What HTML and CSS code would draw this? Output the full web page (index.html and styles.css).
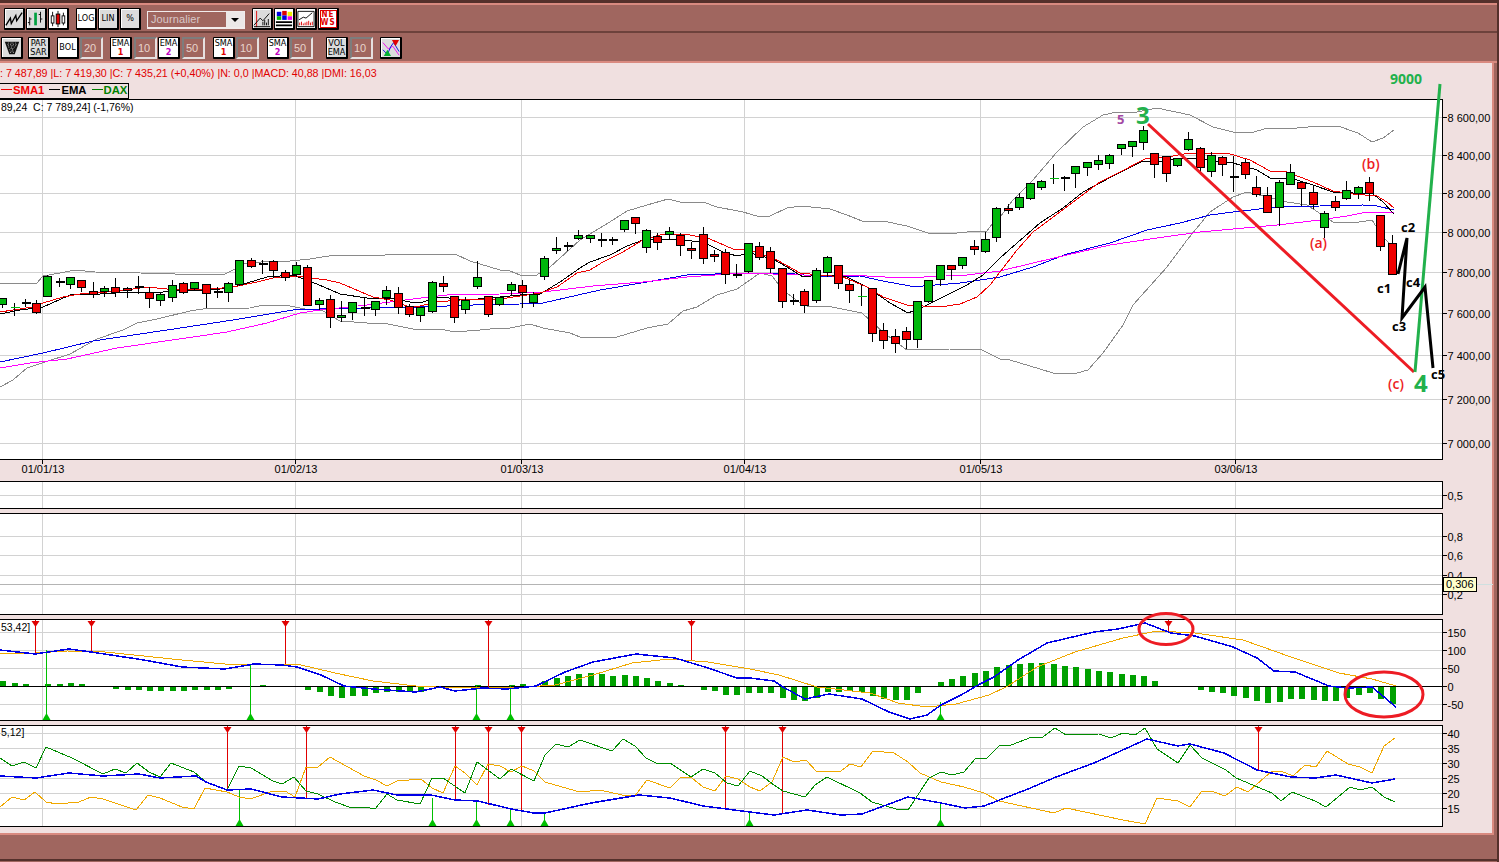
FILE: index.html
```html
<!DOCTYPE html>
<html lang="fr">
<head>
  <meta charset="UTF-8">
  <meta name="viewport" content="width=device-width, initial-scale=1.0">
  <title>DAX - Journalier</title>
  <link rel="stylesheet" href="styles.css">
</head>
<body>
  <div class="window">
    <header class="toolbars">
      <div class="toolbar toolbar-top">
        <button class="tool tool-grey"><svg viewBox="0 0 20 20"><path class="ic-line" d="M1 17 6 9 7 15 12 6 13 12 19 3"/></svg></button>
        <button class="tool tool-grey"><svg viewBox="0 0 20 20"><path class="ic-thin" d="M3 8V17M1 14H3M3 10H5M15 2V14M13 5H15M15 10H17"/><rect x="8" y="3" width="3" height="14" fill="#00a040"/></svg></button>
        <button class="tool tool-white"><svg viewBox="0 0 20 20"><path class="ic-thin" d="M4 2V18M10 1V19M16 3V17"/><rect x="2.500" y="6.500" width="3" height="8" fill="#fff" stroke="#000"/><rect x="8" y="4.500" width="4" height="11" fill="#e00000" stroke="#000"/><rect x="14.500" y="6.500" width="3" height="8" fill="#fff" stroke="#000"/></svg></button>
        <button class="tool tool-white gap-6">LOG</button>
        <button class="tool tool-grey">LIN</button>
        <button class="tool tool-grey">%</button>
        <div class="period">
          <span class="period-value">Journalier</span>
          <span class="period-arrow"></span>
        </div>
        <button class="tool tool-grey gap-6"><svg viewBox="0 0 20 20"><path d="M4 1V19" stroke="#e00000" fill="none"/><path class="ic-thin" d="M1 17 8 9 11 12 18 4M1 18.500H19"/><path d="M11 17V13M13 17V11M15 17V14M17 17V10" stroke="#000" fill="none"/></svg></button>
        <button class="tool tool-white"><svg viewBox="0 0 20 20"><rect x="2" y="2" width="5" height="5" fill="#0000e0"/><rect x="8" y="1" width="5" height="5" fill="#e00000"/><rect x="14" y="2" width="5" height="5" fill="#f0f000"/><rect x="2" y="7" width="5" height="4" fill="#00c000"/><rect x="8" y="6" width="5" height="5" fill="#0000e0"/><rect x="14" y="7" width="5" height="4" fill="#f000f0"/><path class="ic-bar" d="M1 13.500H19M1 17H19"/></svg></button>
        <button class="tool tool-white"><svg viewBox="0 0 20 20"><path d="M1 1.500H19V18.500H1Z" fill="none" stroke="#000"/><path class="ic-thin" d="M2 11 7 8 10 9 17 3"/><path d="M3 17V14M5 17V13M7 17V15M9 17V14M11 17V13M13 17V12M15 17V14M17 17V13" stroke="#e00000" fill="none"/></svg></button>
        <button class="tool tool-white"><span class="news-text">NE<br>WS</span></button>
      </div>
      <div class="toolbar toolbar-bottom">
        <button class="tool tool-grey tool-tall"><svg viewBox="0 0 20 20"><path d="M2 3H18L13 17H7Z" fill="#111"/><path d="M5 6H15M6 9H14M7 12H13M8 15H12M6 4V8M9 4V16M11 4V16M14 4V8" stroke="#bbb" stroke-dasharray="1 2" fill="none"/></svg></button>
        <button class="tool tool-grey tool-tall gap-4">PAR<br>SAR</button>
        <button class="tool tool-white tool-tall gap-6">BOL</button>
        <span class="field">20</span>
        <button class="tool tool-white tool-tall gap-6"><span>EMA<br><b class="num-red">1</b></span></button>
        <span class="field gap-1">10</span>
        <button class="tool tool-white tool-tall"><span>EMA<br><b class="num-purple">2</b></span></button>
        <span class="field gap-1">50</span>
        <button class="tool tool-white tool-tall gap-7"><span>SMA<br><b class="num-red">1</b></span></button>
        <span class="field">10</span>
        <button class="tool tool-white tool-tall gap-7"><span>SMA<br><b class="num-purple">2</b></span></button>
        <span class="field">50</span>
        <button class="tool tool-grey tool-tall gap-12">VOL<br>EMA</button>
        <span class="field gap-1">10</span>
        <button class="tool tool-grey tool-tall gap-6"><svg viewBox="0 0 20 20"><path d="M1 4 7 11 12 8 19 18" fill="none" stroke="#f000f0"/><path d="M1 12 6 17 10 8 13 4 19 14" fill="none" stroke="#0000e0"/><path d="M11 1H19L15 8Z" fill="#e00000"/><path d="M2 19H10L6 12Z" fill="#00b030"/></svg></button>
      </div>
    </header>

    <main class="content">
      <p class="quote">: 7 487,89 |L: 7 419,30 |C: 7 435,21 (+0,40%) |N: 0,0 |MACD: 40,88 |DMI: 16,03</p>
      <div class="legend">
        <span class="legend-item legend-red">SMA1</span>
        <span class="legend-item legend-black">EMA</span>
        <span class="legend-item legend-green">DAX</span>
      </div>
      <svg class="pane" id="pricePane" viewBox="0 99 1494 382" width="1494" height="382"></svg>
      <svg class="pane" id="emptyPane" viewBox="0 481 1494 32" width="1494" height="32"></svg>
      <svg class="pane" id="volumePane" viewBox="0 513 1494 106" width="1494" height="106"></svg>
      <svg class="pane" id="macdPane" viewBox="0 619 1494 106" width="1494" height="106"></svg>
      <svg class="pane" id="dmiPane" viewBox="0 725 1494 102" width="1494" height="102"></svg>
    </main>

    <footer class="statusbar"></footer>

    <svg class="drawing" viewBox="0 0 1499 862" width="1499" height="862">
      <path class="draw-red" d="M1148 124 1414 372"/>
      <path class="draw-green" d="M1415 372 1440 84"/>
      <path class="draw-black" d="M1398 274 1407 238 1402 318 1425 287 1433 368"/>
      <ellipse class="draw-ring" cx="1166" cy="629" rx="27" ry="15.500"/>
      <ellipse class="draw-ring" cx="1384" cy="694.500" rx="39" ry="22.500"/>
      <text class="note note-green" x="1390" y="84">9000</text>
      <text class="note note-big" x="1136" y="124">3</text>
      <text class="note note-big" x="1414" y="392">4</text>
      <text class="note note-purple" x="1117" y="124">5</text>
      <text class="note note-red" x="1362" y="169">(b)</text>
      <text class="note note-red" x="1310" y="248">(a)</text>
      <text class="note note-red" x="1388" y="389">(c)</text>
      <text class="note" x="1377" y="293">c1</text>
      <text class="note" x="1401" y="232">c2</text>
      <text class="note" x="1392" y="331">c3</text>
      <text class="note" x="1406" y="287">c4</text>
      <text class="note" x="1431" y="379">c5</text>
    </svg>
  </div>

  <script src="chart.js"></script>
</body>
</html>
```

FILE: styles.css
```css
body {
  margin: 0;
  padding: 0;
  font-family: "Liberation Sans", Arial, sans-serif;
}

.window {
  position: relative;
  width: 1499px;
  height: 862px;
  box-sizing: border-box;
  display: flex;
  flex-direction: column;
  overflow: hidden;
  background: #a0665f;
  border-top: 3px solid #54302b;
  border-right: 2px solid #54302b;
}

/* toolbars */
.toolbars {
  border-top: 2px solid #d98a80;
}

.toolbar {
  display: flex;
  box-sizing: border-box;
  column-gap: 1px;
}

.toolbar-top {
  height: 28px;
  padding: 3px 0 0 4px;
  border-bottom: 2px solid #6d423c;
}

.toolbar-bottom {
  height: 30px;
  padding: 4px 0 0 1px;
  border-bottom: 2px solid #d98a80;
}

.tool {
  box-sizing: border-box;
  width: 21px;
  height: 22px;
  padding: 0;
  display: flex;
  align-items: center;
  justify-content: center;
  border: 1px solid #000;
  border-right-width: 2px;
  border-bottom-width: 2px;
  border-radius: 1px;
  box-shadow: inset 1px 1px 0 #fff;
  font-family: "Liberation Sans Narrow", "DejaVu Sans Condensed", "Liberation Sans", sans-serif;
  font-size: 9px;
  line-height: 9px;
  color: #000;
  text-align: center;
}

.tool svg {
  display: block;
  width: 18px;
  height: 18px;
}

.tool-grey {
  background: #dcdcdc;
}

.tool-white {
  background: #fff;
}

.tool-tall {
  width: 22px;
}

.gap-1 {
  margin-left: 1px;
}

.gap-4 {
  margin-left: 4px;
}

.gap-6 {
  margin-left: 6px;
}

.gap-7 {
  margin-left: 7px;
}

.gap-12 {
  margin-left: 12px;
}

.tool b {
  font-weight: 700;
}

.num-red {
  color: #e00000;
}

.num-purple {
  color: #c000c0;
}

.news-text {
  display: block;
  width: 15px;
  border: 1px solid #e00000;
  color: #e00000;
  font-weight: 700;
  font-size: 8px;
  line-height: 8px;
  letter-spacing: 1px;
}

.ic-line {
  fill: none;
  stroke: #000;
  stroke-width: 1.500;
}

.ic-thin {
  fill: none;
  stroke: #000;
  stroke-width: 1;
}

.ic-bar {
  fill: none;
  stroke: #000;
  stroke-width: 2;
}

.period {
  display: flex;
  align-items: stretch;
  box-sizing: border-box;
  width: 98px;
  height: 18px;
  margin: 3px 0 0 5px;
  border: 1px solid #f2ecec;
  border-bottom-width: 2px;
  background: #a0665f;
}

.period-value {
  flex: 1;
  padding-left: 3px;
  color: #d8c8c8;
  font-size: 11px;
  line-height: 15px;
  letter-spacing: .1px;
}

.period-arrow {
  position: relative;
  width: 18px;
  background: #ece8e8;
}

.period-arrow::after {
  content: "";
  position: absolute;
  left: 5px;
  top: 6px;
  border: 4px solid transparent;
  border-top: 4px solid #000;
  border-bottom: 0;
}

.field {
  box-sizing: border-box;
  width: 23px;
  height: 22px;
  padding-left: 2px;
  border: 2px solid;
  border-color: #7d7d7d #e6e0e0 #e6e0e0 #7d7d7d;
  background: #a0665f;
  color: #e8d4cc;
  font-size: 11px;
  line-height: 18px;
}

/* chart area */
.content {
  flex: none;
  height: 770px;
  margin-right: 3px;
  border-right: 2px solid #d98a80;
  border-bottom: 2px solid #d98a80;
  background: #f0e0e0;
}

.quote {
  height: 20px;
  margin: 0;
  color: #e00000;
  font-size: 10.700px;
  line-height: 20px;
  white-space: nowrap;
}

.legend {
  display: flex;
  box-sizing: border-box;
  width: fit-content;
  height: 16px;
  padding: 0 1px 0 1px;
  column-gap: 5px;
  border: 1px solid #000;
  border-left: 0;
  font-weight: 700;
  font-size: 11.300px;
  line-height: 12px;
}

.legend-item::before {
  content: "";
  display: inline-block;
  width: 11px;
  height: 1px;
  margin-right: 1px;
  vertical-align: 4px;
  background: currentColor;
}

.legend-red {
  color: #f00000;
}

.legend-black {
  color: #000;
}

.legend-green {
  color: #008000;
}

.pane {
  display: block;
}

.pane-box {
  fill: #fff;
  stroke: #000;
  shape-rendering: crispEdges;
}

.pane-edge {
  fill: none;
  stroke: #000;
  shape-rendering: crispEdges;
}

.grid {
  stroke: #d2d2d2;
  shape-rendering: crispEdges;
}

.tick {
  stroke: #000;
  shape-rendering: crispEdges;
}

.axis-label {
  font-size: 11px;
  fill: #000;
}

.pane-title {
  font-size: 10.500px;
  fill: #000;
  white-space: pre;
}

.curve {
  fill: none;
  shape-rendering: crispEdges;
}

.curve-band {
  stroke: #8a8a8a;
}

.curve-sma {
  stroke: #f00000;
}

.curve-ema {
  stroke: #000;
}

.curve-blue {
  stroke: #0000e6;
  stroke-width: 1.500;
}

.curve-blue-thin {
  stroke: #0000e6;
}

.curve-pink {
  stroke: #ff00ff;
}

.curve-orange {
  stroke: #f0a800;
}

.curve-dmi {
  stroke: #008c00;
}

.zero-line {
  stroke: #000;
  stroke-width: 1;
  shape-rendering: crispEdges;
}

.wick {
  stroke: #000;
  shape-rendering: crispEdges;
}

.body {
  stroke: #000;
  shape-rendering: crispEdges;
}

.body-up {
  fill: #00b80c;
}

.body-down {
  fill: #f00000;
}

.doji {
  stroke: #000;
  stroke-width: 2;
  shape-rendering: crispEdges;
}

.doji-up {
  stroke: #00b80c;
  stroke-width: 1;
  shape-rendering: crispEdges;
}

.hist-bar {
  fill: #00a000;
  shape-rendering: crispEdges;
}

.signal-red {
  stroke: #e00000;
  shape-rendering: crispEdges;
}

.signal-green {
  stroke: #00c000;
  shape-rendering: crispEdges;
}

.mark-red {
  fill: #e00000;
}

.mark-green {
  fill: #00c000;
}

.cross-line {
  stroke: #b4b4b4;
  shape-rendering: crispEdges;
}

.cross-line-end {
  stroke: #cfe0e0;
  shape-rendering: crispEdges;
}

.tip-box {
  fill: #ffffcc;
  stroke: #000;
  shape-rendering: crispEdges;
}

/* bottom bar */
.statusbar {
  flex: 1;
  margin-bottom: 1px;
  border-bottom: 2px solid #54302b;
}

/* hand drawn notes over the charts */
.drawing {
  position: absolute;
  left: 0;
  top: -3px;
  pointer-events: none;
}

.draw-red,
.draw-green,
.draw-black,
.draw-ring {
  fill: none;
}

.draw-red {
  stroke: #ed1c24;
  stroke-width: 3;
}

.draw-green {
  stroke: #22b14c;
  stroke-width: 3;
}

.draw-black {
  stroke: #000;
  stroke-width: 3;
}

.draw-ring {
  stroke: #ed1c24;
  stroke-width: 3;
}

.note {
  font-family: "Open Sans", sans-serif;
  font-size: 13px;
  font-weight: 700;
  fill: #000;
}

.note-green {
  font-size: 14px;
  fill: #22b14c;
}

.note-big {
  font-size: 24px;
  fill: #22b14c;
}

.note-purple {
  fill: #a349a4;
}

.note-red {
  font-size: 14px;
  font-weight: 600;
  fill: #ed1c24;
}
```

FILE: chart.js
```js
// all coordinates below are page pixels, the panes use matching viewBoxes
const SVG_NS = "http://www.w3.org/2000/svg";
const RIGHT = 1442.5;
const MONTH_LINES = [42.5, 295.5, 521.5, 744.5, 980.5, 1235.5];
const DATES = ["01/01/13", "01/02/13", "01/03/13", "01/04/13", "01/05/13", "03/06/13"];

function slotX(i) {
  return Math.round(2.3 + 11.295 * i);
}

function add(svg, name, attrs, text) {
  const node = document.createElementNS(SVG_NS, name);
  for (const key in attrs) node.setAttribute(key, attrs[key]);
  if (text) node.textContent = text;
  svg.appendChild(node);
  return node;
}

function line(svg, x1, y1, x2, y2, cls) {
  add(svg, "line", { x1, y1, x2, y2, class: cls });
}

function curve(svg, points, cls) {
  add(svg, "polyline", { points, class: "curve " + cls });
}

// white box, grid, ticks and value labels of one pane
function drawFrame(svg, top, bottom, rows) {
  add(svg, "rect", { x: -2.5, y: top, width: RIGHT + 2.5, height: bottom - top, class: "pane-box" });
  MONTH_LINES.forEach((x) => line(svg, x, top, x, bottom, "grid"));
  rows.forEach(([y, label]) => {
    line(svg, 0, y, RIGHT, y, "grid");
    line(svg, RIGHT, y, RIGHT + 4, y, "tick");
    add(svg, "text", { x: RIGHT + 5, y: y + 4, class: "axis-label" }, label);
  });
}

function drawEdge(svg, top, bottom) {
  add(svg, "rect", { x: -2.5, y: top, width: RIGHT + 2.5, height: bottom - top, class: "pane-edge" });
}

function signalsDown(svg, top, list) {
  list.forEach(([x, y]) => {
    line(svg, x, top, x, y, "signal-red");
    add(svg, "path", { d: `M${x - 4} ${top + 1}H${x + 4}L${x} ${top + 7}Z`, class: "mark-red" });
  });
}

function signalsUp(svg, bottom, list) {
  list.forEach(([x, y]) => {
    line(svg, x, bottom, x, y, "signal-green");
    add(svg, "path", { d: `M${x - 4} ${bottom}H${x + 4}L${x} ${bottom - 7}Z`, class: "mark-green" });
  });
}

// [wick top, body top, body bottom, wick bottom, kind], thirds of a pixel below y=100
// kind: g up, r down, k black doji, x green doji
const CANDLES = [
  [595,595,613,620,"g"],[606,620,620,645,"x"],[593,605,605,618,"k"],[598,610,635,638,"r"],[522,528,587,587,"g"],
  [530,542,542,557,"k"],[527,531,553,563,"g"],[537,541,560,572,"r"],[543,572,582,590,"r"],[555,565,572,587,"g"],
  [531,560,575,587,"r"],[558,563,569,590,"r"],[525,557,557,578,"k"],[558,577,593,620,"r"],[575,583,601,614,"g"],
  [537,556,592,603,"g"],[544,550,577,578,"r"],[547,547,563,567,"g"],[550,553,580,620,"r"],[558,574,574,590,"k"],
  [544,550,577,602,"g"],[477,481,551,555,"g"],[471,481,497,500,"r"],[478,488,488,518,"k"],[477,484,511,532,"r"],
  [507,517,532,540,"r"],[484,496,521,527,"g"],[492,502,616,616,"r"],[592,601,613,627,"g"],[582,598,652,680,"r"],
  [600,646,652,662,"g"],[607,607,637,657,"g"],[592,620,620,645,"k"],[600,604,628,645,"g"],[555,571,592,612,"g"],
  [558,580,622,638,"r"],[610,619,643,648,"r"],[622,622,646,662,"g"],[540,547,632,636,"g"],[525,549,559,573,"r"],
  [585,589,652,665,"r"],[588,601,628,639,"g"],[480,532,559,563,"g"],[589,589,643,647,"r"],[592,592,612,615,"g"],
  [544,553,571,583,"g"],[537,556,575,622,"r"],[574,583,607,617,"g"],[465,475,529,537,"g"],[408,445,451,458,"g"],
  [423,435,435,450,"k"],[387,406,415,418,"g"],[403,406,415,425,"g"],[397,416,416,437,"k"],[408,416,416,431,"k"],
  [361,361,388,392,"g"],[352,352,370,398,"r"],[384,391,442,455,"g"],[397,409,427,446,"r"],[378,394,401,414,"g"],
  [397,404,436,464,"r"],[424,445,451,473,"r"],[378,403,475,488,"r"],[448,463,469,482,"r"],[445,455,523,548,"r"],
  [489,521,521,530,"k"],[430,430,514,516,"g"],[424,439,472,476,"r"],[438,454,505,515,"r"],[502,505,604,620,"r"],
  [579,599,599,613,"k"],[565,574,616,635,"r"],[502,511,601,606,"g"],[466,472,517,527,"g"],[492,496,550,563,"r"],
  [538,553,571,607,"r"],[553,589,589,616,"x"],[565,565,700,722,"r"],[667,691,721,743,"r"],[685,709,730,755,"r"],
  [679,694,718,743,"r"],[601,604,718,740,"g"],[538,541,604,606,"g"],[492,496,538,555,"g"],[492,496,508,538,"r"],
  [472,472,496,503,"g"],[418,439,448,461,"r"],[392,418,454,457,"g"],[319,325,412,422,"g"],[310,325,331,338,"r"],
  [277,290,322,328,"g"],[250,250,294,296,"g"],[238,244,262,266,"g"],[189,235,235,250,"x"],[226,232,232,269,"k"],
  [199,199,220,260,"g"],[184,187,202,224,"g"],[162,181,193,208,"g"],[160,166,190,205,"g"],[133,133,145,163,"g"],
  [121,124,139,167,"g"],[75,91,127,146,"g"],[157,160,193,232,"r"],[169,169,220,244,"r"],[175,175,196,199,"g"],
  [94,118,148,151,"g"],[139,145,202,212,"r"],[154,166,214,227,"g"],[166,172,193,224,"r"],[166,227,227,272,"k"],
  [175,187,223,235,"r"],[226,262,283,289,"r"],[259,286,337,337,"r"],[238,247,322,376,"g"],[190,217,253,253,"g"],
  [241,247,265,316,"r"],[253,277,313,325,"r"],[331,340,382,412,"g"],[286,304,322,331,"r"],[241,271,295,298,"g"],
  [256,262,280,295,"g"],[229,247,280,301,"r"],[346,346,439,449,"r"],[403,430,523,523,"r"]
];

function toPage(z) {
  return Math.round(100 + z / 3) + 0.5;
}

function drawCandles(svg) {
  CANDLES.forEach(([high, open, close, low, kind], i) => {
    const x = slotX(i) + 0.5;
    line(svg, x, toPage(high), x, toPage(low), "wick");
    if (kind === "k") {
      line(svg, x - 4, toPage(open), x + 5, toPage(open), "doji");
    } else if (kind === "x") {
      line(svg, x - 4, toPage(open), x + 5, toPage(open), "doji-up");
    } else {
      const top = toPage(open);
      add(svg, "rect", {
        x: x - 4,
        y: top,
        width: 8,
        height: toPage(close) - top,
        class: "body " + (kind === "g" ? "body-up" : "body-down")
      });
    }
  });
}

function drawPrice() {
  const svg = document.getElementById("pricePane");
  drawFrame(svg, 99.5, 459.5, [
    [117.5, "8 600,00"], [155.5, "8 400,00"], [193.5, "8 200,00"], [232.5, "8 000,00"], [272.5, "7 800,00"],
    [313.5, "7 600,00"], [355.5, "7 400,00"], [399.5, "7 200,00"], [443.5, "7 000,00"]
  ]);
  curve(svg, "0,284 13,283 37,283 43,276 60,273 75,270 95,272 140,273 175,274 225,274 235,269 243,264 270,261 290,261 310,259 335,255 385,255 410,254 455,254 470,261 500,270 510,271 520,275 535,276 550,267 580,240 613,220 627,211 647,205 668,199 680,202 703,202 717,207 743,212 760,217 770,216 787,208 802,206 830,209 847,215 862,221 883,221 907,226 928,233 947,234 967,232 987,231 993,223 1000,217 1013,200 1033,180 1057,152 1083,127 1103,115 1117,112 1137,112 1157,108 1190,115 1213,127 1233,132 1250,133 1268,128 1297,128 1320,126 1338,126 1358,133 1372,142 1383,138 1394,130", "curve-band");
  curve(svg, "0,387 13,380 27,368 42,363 70,354 97,339 123,330 137,323 157,319 190,311 203,309 250,308 263,305 290,306 305,309 323,311 340,321 367,323 383,323 413,329 440,329 455,332 480,330 500,328 510,328 530,324 543,328 570,333 580,337 617,337 647,328 668,324 683,311 697,307 717,295 737,289 760,273 772,276 783,290 800,303 807,306 827,306 862,313 883,332 907,350 950,349 980,349 1000,359 1010,360 1030,366 1053,373 1077,373 1088,370 1103,353 1123,325 1133,305 1167,267 1187,240 1210,212 1233,197 1247,192 1263,196 1287,202 1307,205 1333,222 1353,223 1372,220 1383,237 1393,247", "curve-band");
  curve(svg, "0,362 43,353 93,341 167,330 233,320 293,310 320,309 367,308 420,307 447,306 473,305 520,304 543,303 600,290 647,282 687,275 743,273 787,273 820,277 860,276 883,281 910,286 923,286 960,283 987,279 1000,277 1033,267 1067,254 1110,243 1147,230 1180,223 1210,215 1233,212 1277,207 1320,206 1363,205 1377,206 1394,210", "curve-blue-thin");
  curve(svg, "0,368 30,363 67,359 117,348 193,337 227,332 267,323 300,313 320,310 367,305 413,299 447,295 500,294 543,292 593,286 643,282 687,277 743,273 803,275 867,276 903,278 967,275 1000,271 1033,263 1067,255 1110,245 1157,238 1200,232 1233,229 1277,225 1320,220 1347,216 1367,212 1394,212", "curve-pink");
  curve(svg, "0,314 20,310 43,307 70,295 100,294 133,292 163,292 177,290 200,291 230,288 247,283 267,277 293,275 317,284 340,294 367,298 390,298 410,302 423,302 440,297 467,300 500,297 520,295 540,294 560,282 580,268 590,262 610,255 627,246 643,240 660,239 680,240 703,242 723,252 737,256 750,253 773,259 787,267 803,277 820,275 847,277 867,287 890,303 908,313 923,307 943,297 967,285 983,275 1000,258 1017,243 1040,223 1063,208 1083,192 1113,176 1143,161 1163,161 1187,158 1207,160 1233,163 1257,170 1270,178 1290,178 1313,185 1333,192 1353,193 1373,194 1383,202 1394,214", "curve-ema");
  curve(svg, "0,312 33,307 43,303 63,297 80,294 107,292 133,289 147,287 167,289 200,290 233,287 257,282 273,278 297,276 310,278 327,280 340,283 373,297 390,300 407,306 420,306 437,302 460,300 483,299 500,299 520,296 540,293 557,287 577,273 590,270 603,262 623,252 643,240 663,234 690,235 710,239 733,249 750,250 777,260 800,273 820,275 843,277 867,287 883,297 907,305 923,306 940,307 960,304 977,297 990,285 1000,272 1017,250 1033,232 1060,212 1080,197 1100,182 1120,172 1145,159 1167,157 1190,153 1227,153 1250,160 1270,171 1287,172 1313,182 1333,191 1353,194 1377,196 1387,202 1394,208", "curve-sma");
  drawCandles(svg);
  drawEdge(svg, 99.5, 459.5);
  MONTH_LINES.forEach((x, i) => {
    line(svg, x, 459.5, x, 463.5, "tick");
    add(svg, "text", { x: x + 0.5, y: 473, "text-anchor": "middle", class: "axis-label" }, DATES[i]);
  });
  add(svg, "text", { x: 1, y: 111, class: "pane-title" }, "89,24  C: 7 789,24] (-1,76%)");
}

function drawEmpty() {
  const svg = document.getElementById("emptyPane");
  drawFrame(svg, 481.5, 508.5, [[495.5, "0,5"]]);
  drawEdge(svg, 481.5, 508.5);
}

function drawVolume() {
  const svg = document.getElementById("volumePane");
  drawFrame(svg, 513.5, 614.5, [[536.5, "0,8"], [555.5, "0,6"], [575.5, "0,4"], [594.5, "0,2"]]);
  line(svg, 0, 584.5, RIGHT, 584.5, "cross-line");
  line(svg, 1477, 584.5, 1493, 584.5, "cross-line-end");
  drawEdge(svg, 513.5, 614.5);
  add(svg, "rect", { x: 1443.5, y: 577.5, width: 33, height: 14, class: "tip-box" });
  add(svg, "text", { x: 1446, y: 588, class: "axis-label" }, "0,306");
}

// histogram height in thirds of a pixel, one value per candle
const HISTOGRAM = [16,10,6,0,7,7,10,5,0,-4,-8,-11,-11,-15,-16,-15,-16,-12,-13,-12,-10,0,0,4,0,0,0,-13,-19,-29,-35,-29,-29,-22,-17,-17,-17,-18,-4,-2,-3,0,4,0,0,4,7,0,14,25,30,37,39,37,31,33,30,25,16,10,4,-3,-13,-16,-27,-28,-22,-20,-22,-35,-41,-44,-35,-17,-17,-15,-17,-30,-38,-41,-42,-22,-4,13,22,30,39,46,58,62,67,69,70,67,61,58,52,46,41,37,34,31,16,0,-3,-3,-13,-17,-22,-29,-35,-44,-52,-47,-38,-38,-41,-44,-44,-35,-26,-22,-38,-53];

function drawMacd() {
  const svg = document.getElementById("macdPane");
  const zero = 686;
  drawFrame(svg, 619.5, 720.5, [[632.5, "150"], [650.5, "100"], [668.5, "50"], [686.5, "0"], [704.5, "-50"]]);
  HISTOGRAM.forEach((value, i) => {
    if (!value) return;
    const height = Math.max(1, Math.round(Math.abs(value) / 3));
    add(svg, "rect", {
      x: slotX(i) - 2,
      y: value > 0 ? zero - height : zero,
      width: 6,
      height,
      class: "hist-bar"
    });
  });
  line(svg, 0, zero + 0.5, RIGHT, zero + 0.5, "zero-line");
  signalsDown(svg, 620, [[35.5, 654], [91.5, 652], [285.5, 665], [488.5, 688], [691.5, 660], [1168.5, 632]]);
  signalsUp(svg, 720, [[46.5, 650], [250.5, 664], [476.5, 686], [510.5, 686], [940.5, 702]]);
  curve(svg, "0,654 36,653 67,651 105,652 182,660 225,664 297,664 335,673 373,681 416,686 455,688 526,687 555,685 593,675 632,663 670,659 708,662 750,669 779,675 817,687 870,693 898,703 927,707 956,704 989,695 1008,686 1037,667 1075,652 1123,638 1157,631 1195,633 1243,640 1291,657 1339,673 1372,679 1396,686", "curve-orange");
  curve(svg, "0,650 35,654 69,649 91,652 144,660 182,667 225,669 254,664 282,665 297,667 321,675 344,686 373,689 416,692 440,687 455,691 483,688 507,689 536,686 565,672 593,662 636,654 675,658 708,668 737,678 750,678 774,681 783,687 805,699 829,694 862,699 889,712 910,719 927,715 941,705 961,695 980,684 994,677 1018,660 1047,643 1094,632 1118,629 1145,623 1171,633 1195,636 1233,647 1257,658 1274,671 1295,672 1329,686 1348,688 1372,687 1396,707", "curve-blue");
  drawEdge(svg, 619.5, 720.5);
  add(svg, "text", { x: 1, y: 631, class: "pane-title" }, "53,42]");
}

function drawDmi() {
  const svg = document.getElementById("dmiPane");
  drawFrame(svg, 725.5, 826.5, [[733.5, "40"], [748.5, "35"], [763.5, "30"], [778.5, "25"], [793.5, "20"], [808.5, "15"]]);
  signalsDown(svg, 726, [[227.5, 790], [306.5, 798], [455.5, 800], [488.5, 805], [521.5, 812], [725.5, 809], [782.5, 813], [1258.5, 770]]);
  signalsUp(svg, 826, [[239.5, 789], [432.5, 798], [476.5, 801], [510.5, 810], [544.5, 812], [749.5, 812], [940.5, 803]]);
  curve(svg, "0,807 12,797 24,800 35,792 46,802 57,804 79,802 91,797 103,799 136,810 148,795 160,798 182,807 194,809 205,788 227,792 239,797 250,799 273,791 285,791 295,797 306,767 318,767 330,757 364,776 376,780 387,786 397,781 421,779 432,788 443,793 455,766 465,773 477,785 488,764 500,766 511,772 522,766 534,771 545,782 569,789 580,792 600,790 622,795 635,796 647,780 670,788 681,777 692,778 703,787 715,791 726,776 738,779 750,787 760,791 772,782 783,757 794,762 806,760 817,772 841,771 850,764 861,767 873,751 894,753 908,762 920,773 941,782 964,787 984,793 999,801 1054,813 1066,808 1123,820 1145,824 1157,798 1178,801 1190,807 1202,791 1214,792 1225,796 1237,787 1248,792 1272,771 1281,771 1293,776 1305,765 1316,767 1327,751 1348,764 1360,767 1372,773 1384,746 1395,738", "curve-orange");
  curve(svg, "0,758 12,766 24,762 36,768 46,747 72,758 103,774 115,769 126,773 137,763 149,772 160,777 171,763 194,772 206,782 227,790 239,766 251,768 273,781 282,784 294,777 306,791 318,794 335,802 352,808 364,807 375,809 387,794 397,800 420,804 432,778 443,778 465,793 477,762 500,779 511,769 534,781 545,755 556,744 568,747 580,740 612,751 623,739 635,746 646,758 658,764 670,763 691,777 703,769 715,773 727,783 738,786 750,771 762,776 774,785 783,791 805,797 815,785 827,777 860,793 872,802 896,809 908,810 929,778 941,772 952,775 964,772 975,759 987,758 999,746 1011,745 1032,737 1043,737 1055,728 1066,735 1099,734 1111,738 1123,733 1135,735 1145,728 1157,749 1178,763 1190,745 1202,758 1226,770 1236,778 1272,793 1281,801 1292,792 1315,801 1326,807 1350,787 1360,790 1372,787 1384,797 1395,802", "curve-dmi");
  curve(svg, "0,776 36,778 69,773 103,776 139,774 160,778 196,776 206,782 227,790 251,789 282,797 318,799 340,794 373,790 397,795 431,795 455,800 478,801 511,809 534,813 545,813 591,803 639,795 670,798 703,806 750,812 774,815 807,810 841,815 862,814 908,797 941,803 965,808 984,806 1028,789 1056,777 1094,763 1147,739 1178,746 1190,744 1224,753 1257,770 1291,777 1315,778 1336,775 1372,783 1395,779", "curve-blue");
  drawEdge(svg, 725.5, 826.5);
  add(svg, "text", { x: 1, y: 736, class: "pane-title" }, "5,12]");
}

drawPrice();
drawEmpty();
drawVolume();
drawMacd();
drawDmi();
```
